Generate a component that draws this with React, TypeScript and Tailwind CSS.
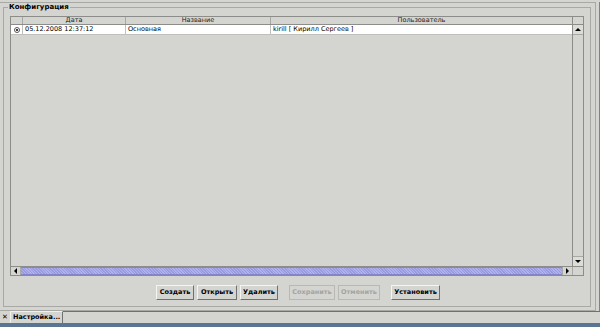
import React from 'react'

const buttons = [
  { label: 'Создать', w: 'w-[38px]', disabled: false, ml: 'ml-0' },
  { label: 'Открыть', w: 'w-[40px]', disabled: false, ml: 'ml-[3px]' },
  { label: 'Удалить', w: 'w-[38px]', disabled: false, ml: 'ml-[3px]' },
  { label: 'Сохранить', w: 'w-[46px]', disabled: true, ml: 'ml-[11px]' },
  { label: 'Отменить', w: 'w-[42px]', disabled: true, ml: 'ml-[3px]' },
  { label: 'Установить', w: 'w-[49px]', disabled: false, ml: 'ml-[11px]' },
]

function Arrow({ dir }: { dir: 'up' | 'down' | 'left' | 'right' }) {
  const pts = {
    up: '1,4 4,1 7,4',
    down: '1,1 4,4 7,1',
    left: '4,0 1,3 4,6',
    right: '1,0 4,3 1,6',
  }[dir]
  const vb = dir === 'up' || dir === 'down' ? '0 0 8 5' : '0 0 5 7'
  const cls = dir === 'up' || dir === 'down' ? 'h-[5px] w-[8px]' : 'h-[7px] w-[5px]'
  return (
    <svg viewBox={vb} className={cls}>
      <polygon points={pts} fill="#000" />
    </svg>
  )
}

export default function App() {
  return (
    <div className="flex h-[327px] w-[600px] flex-col overflow-hidden bg-[#d4d4d0] font-['DejaVu_Sans',sans-serif] text-black">
      <div className="flex h-[311px] pt-[2px]">
        <div className="flex flex-1 flex-col border-t border-r border-b border-[#a8a8a4] pr-[1px] pb-[3px]">
          <fieldset className="mx-[3px] flex flex-1 flex-col border border-[#a8a8a4] px-[6px] pt-0 pb-[4px]">
            <legend className="-ml-[2px] px-[1px] text-[7px] font-bold leading-[9px]">Конфигурация</legend>
            <div className="mt-[4px] flex h-[260px] flex-col border border-[#8c8c88]">
              <div className="flex flex-1">
                <div className="flex flex-1 flex-col">
                  <div className="flex h-[8px] border-b border-[#8c8c88] text-[6.5px] leading-[7px] text-[#202020]">
                    <div className="w-[12px] border-r border-[#a8a8a4]" />
                    <div className="w-[103px] border-r border-[#a8a8a4] text-center">Дата</div>
                    <div className="w-[145px] border-r border-[#a8a8a4] text-center">Название</div>
                    <div className="flex-1 text-center">Пользователь</div>
                  </div>
                  <div className="flex h-[10px] border-b border-[#c0c0bc] bg-white text-[6.5px] leading-[9px] text-[#000]">
                    <div className="flex w-[12px] items-center justify-center border-r border-[#c0c0bc]">
                      <div className="flex h-[6px] w-[6px] items-center justify-center rounded-full border border-[#555]">
                        <div className="h-[2px] w-[2px] rounded-full bg-black" />
                      </div>
                    </div>
                    <div className="w-[103px] border-r border-[#c0c0bc] pl-[2px]">05.12.2008 12:37:12</div>
                    <div className="w-[145px] border-r border-[#c0c0bc] pl-[2px]">Основная</div>
                    <div className="flex-1 pl-[2px]">kirill [ Кирилл Сергеев ]</div>
                  </div>
                </div>
                <div className="flex w-[11px] flex-col border-l border-[#8c8c88]">
                  <div className="h-[8px] border-b border-[#8c8c88]" />
                  <div className="flex h-[10px] items-center justify-center border-b border-[#a8a8a4] bg-[#dcdcd8]">
                    <Arrow dir="up" />
                  </div>
                  <div className="flex-1" />
                  <div className="flex h-[10px] items-center justify-center border-t border-[#a8a8a4] bg-[#dcdcd8]">
                    <Arrow dir="down" />
                  </div>
                </div>
              </div>
              <div className="flex h-[9px] border-t border-[#8c8c88]">
                <div className="flex w-[10px] items-center justify-center border-r border-[#a8a8a4]">
                  <Arrow dir="left" />
                </div>
                <div className="flex-1 border-y border-[#8484c8] bg-[#a0a0e4] bg-[repeating-linear-gradient(45deg,#9a9ae0_0px,#9a9ae0_1px,#b0b0ec_1px,#b0b0ec_2px)]" />
                <div className="flex w-[10px] items-center justify-center border-l border-[#a8a8a4]">
                  <Arrow dir="right" />
                </div>
                <div className="w-[11px] border-l border-[#a8a8a4]" />
              </div>
            </div>
            <div className="mt-[9px] flex pl-[146px]">
              {buttons.map((b) => (
                <div
                  key={b.label}
                  className={`${b.w} ${b.ml} flex h-[15px] items-center justify-center border text-[6.5px] font-bold ${
                    b.disabled
                      ? 'border-[#b8b8b4] text-[#a4a4a0]'
                      : 'border-t-[#f4f4f0] border-l-[#f4f4f0] border-r-[#707070] border-b-[#707070] text-black'
                  }`}
                >
                  {b.label}
                </div>
              ))}
            </div>
          </fieldset>
        </div>
        <div className="w-[4px] border-r border-[#6a86a4]" />
      </div>
      <div className="flex h-[12px]">
        <div className="flex w-[10px] items-center justify-center text-[7px] font-bold">✕</div>
        <div className="flex w-[53px] items-center border-t border-r border-l border-t-[#f0f0ec] border-l-[#f0f0ec] border-r-[#707070] pl-[2px] text-[6.5px] font-bold whitespace-nowrap">
          Настройка...
        </div>
        <div className="flex-1 border-t border-[#707070]" />
      </div>
      <div className="flex-1 bg-[#5a7494]" />
    </div>
  )
}
